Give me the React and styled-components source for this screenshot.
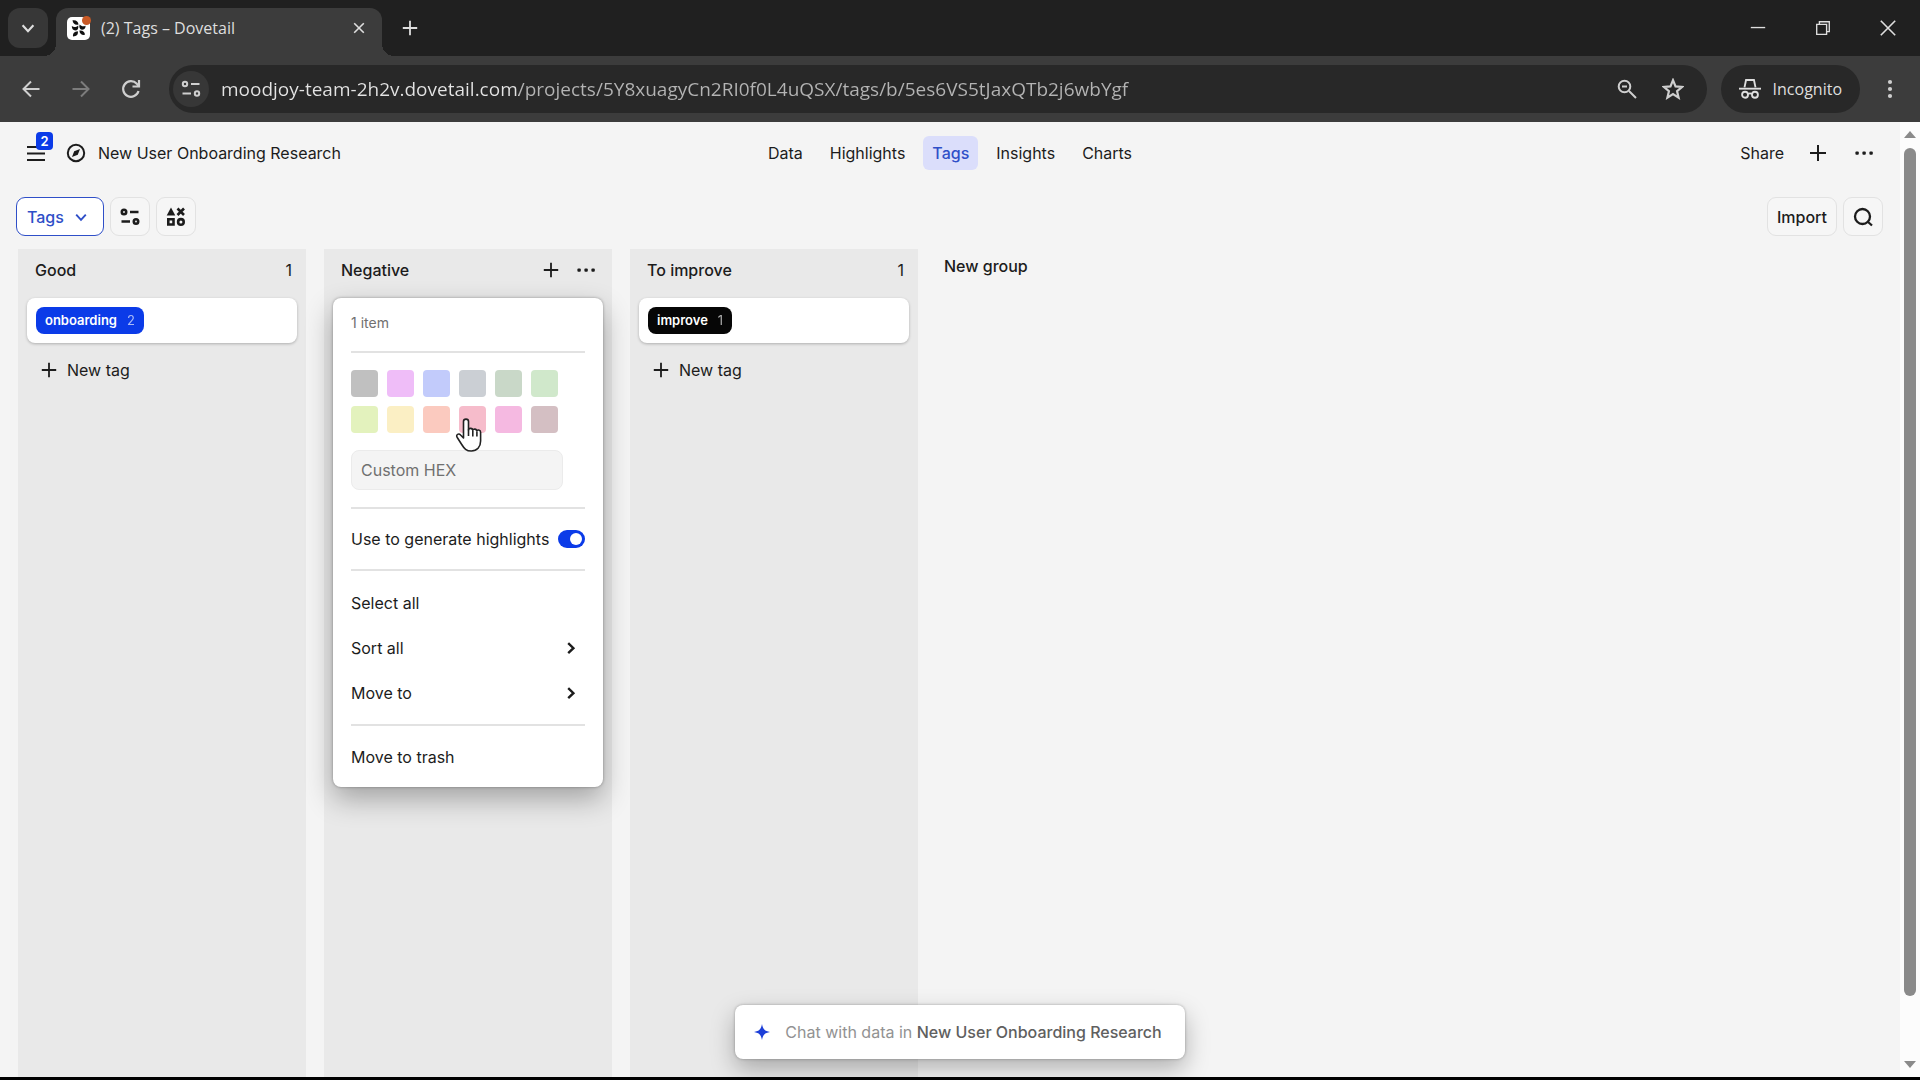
import React, { Component } from 'react';
import styled, { createGlobalStyle } from 'styled-components';

const colors = {
  frame: '#202020',
  toolbar: '#3c3c3c',
  field: '#282828',
  page: '#f4f4f4',
  column: '#e9e9e9',
  text: '#1c1c1c',
  muted: '#707070',
  line: '#e2e2e2',
  blue: '#0b3be8',
  link: '#2f4fc8',
};

const chromeFont = '"Open Sans", "Noto Sans", sans-serif';
const appFont = 'Inter, "Liberation Sans", sans-serif';

const GlobalStyle = createGlobalStyle`
  *, *::before, *::after {
    box-sizing: border-box;
  }
  html, body {
    margin: 0;
    padding: 0;
    background-color: ${colors.page};
  }
  button, input, select {
    margin: 0;
    padding: 0;
    border: 0;
    background: none;
    color: inherit;
    font: inherit;
  }
  svg {
    display: block;
    flex: none;
  }
`

const Window = styled.div`
  position: relative;
  display: flex;
  flex-direction: column;
  min-height: 100vh;
  border-bottom: 3px solid #000;
  color: ${colors.text};
  font-family: ${appFont};
  font-size: 16px;
  line-height: 20px;
`

/* browser frame */

const TabStrip = styled.div`
  display: flex;
  align-items: flex-end;
  height: 56px;
  background-color: ${colors.frame};
  color: #dedede;
  font-family: ${chromeFont};
`

const TabSearch = styled.button`
  display: grid;
  place-items: center;
  align-self: center;
  width: 40px;
  height: 40px;
  margin: 0 8px;
  border-radius: 12px;
  background-color: #373737;
`

const BrowserTab = styled.div`
  position: relative;
  display: flex;
  align-items: center;
  width: 326px;
  height: 48px;
  padding: 0 11px 8px;
  border-radius: 12px 12px 0 0;
  background-color: ${colors.toolbar};
  font-size: 16px;

  &::before, &::after {
    content: '';
    position: absolute;
    bottom: 0;
    width: 12px;
    height: 12px;
  }
  &::before {
    right: 100%;
    background: radial-gradient(circle at 0 0, transparent 12px, ${colors.toolbar} 12px);
  }
  &::after {
    left: 100%;
    background: radial-gradient(circle at 100% 0, transparent 12px, ${colors.toolbar} 12px);
  }
`

const TabTitle = styled.span`
  flex: 1;
  margin-left: 10px;
`

const IconButton = styled.button`
  display: grid;
  place-items: center;
  width: ${props => props.$size || 24}px;
  height: ${props => props.$size || 24}px;
  color: ${props => props.$color || 'inherit'};
`

const NewTab = styled(IconButton)`
  align-self: center;
  margin-left: 12px;
`

const WindowControls = styled.div`
  display: flex;
  align-self: center;
  margin-left: auto;

  button {
    width: 65px;
  }
`

const AddressRow = styled.div`
  display: flex;
  align-items: center;
  height: 66px;
  padding: 0 18px 0 14px;
  background-color: ${colors.toolbar};
  color: #cfcfcf;
  font-family: ${chromeFont};
`

const HistoryButtons = styled.div`
  display: flex;
  gap: 16px;
  margin-right: 21px;
`

const AddressField = styled.label`
  display: flex;
  flex: 1;
  align-items: center;
  height: 48px;
  padding: 0 17px 0 4px;
  border-radius: 24px;
  background-color: ${colors.field};
  gap: 12px;
`

const SiteInfo = styled.span`
  display: grid;
  place-items: center;
  width: 36px;
  height: 36px;
  border-radius: 50%;
  background-color: #373737;
`

const AddressInput = styled.input`
  flex: 1;
  height: 32px;
  background: linear-gradient(90deg, #e4e4e4 298px, #b4b4b4 298px);
  background-clip: text;
  color: transparent;
  font-size: 19px;
`

const Incognito = styled.button`
  display: flex;
  align-items: center;
  gap: 12px;
  height: 48px;
  margin: 0 18px 0 14px;
  padding: 0 18px;
  border-radius: 24px;
  background-color: ${colors.field};
  color: #dedede;
  font-size: 16px;
`

/* page */

const Viewport = styled.div`
  display: flex;
  flex: 1;
`

const Page = styled.div`
  display: flex;
  flex: 1;
  flex-direction: column;
  background-color: ${colors.page};
`

const Header = styled.header`
  display: grid;
  grid-template-columns: 1fr auto 1fr;
  align-items: center;
  height: 62px;
  padding: 0 24px;
`

const HeaderSide = styled.div`
  display: flex;
  align-items: center;
  justify-content: ${props => props.$end ? 'flex-end' : 'flex-start'};
  gap: ${props => props.$end ? 22 : 18}px;
`

const MenuButton = styled(IconButton)`
  position: relative;
`

const Badge = styled.span`
  position: absolute;
  top: -9px;
  left: 12px;
  width: 17px;
  height: 18px;
  border-radius: 4px;
  background-color: ${colors.blue};
  color: #fff;
  font-size: 13px;
  font-weight: 600;
  line-height: 18px;
  text-align: center;
`

const ProjectName = styled.span`
  display: flex;
  align-items: center;
  gap: 12px;
`

const Nav = styled.nav`
  display: flex;
  gap: 9px;
`

const NavLink = styled.a`
  padding: 7px 9px;
  border-radius: 6px;
  background-color: ${props => props.$active ? '#dbdefb' : 'transparent'};
  color: ${props => props.$active ? colors.link : colors.text};
  font-weight: ${props => props.$active ? 500 : 400};
  text-decoration: none;
`

const Toolbar = styled.div`
  display: flex;
  align-items: center;
  gap: 6px;
  padding: 13px 17px 13px 16px;
`

const toolHeight = 39;

const ViewPicker = styled.label`
  display: flex;
  align-items: center;
  gap: 9px;
  height: ${toolHeight}px;
  padding: 0 14px 0 10px;
  border: 1px solid ${colors.link};
  border-radius: 9px;
  background-color: #fff;
  color: ${colors.link};
  font-weight: 500;

  select {
    appearance: none;
    outline: none;
  }
`

const ToolButton = styled.button`
  display: grid;
  place-items: center;
  min-width: 38px;
  height: ${toolHeight}px;
  padding: 0 9px;
  border: 1px solid ${colors.line};
  border-radius: 9px;
  background-color: #f6f6f6;
  font-weight: 500;
`

const Spacer = styled.div`
  flex: 1;
`

const Board = styled.main`
  display: flex;
  flex: 1;
  gap: 18px;
  padding: 0 18px;
`

const Column = styled.section`
  position: relative;
  width: 288px;
  padding: 0 9px;
  background-color: ${colors.column};
`

const ColumnHead = styled.div`
  display: flex;
  align-items: center;
  justify-content: space-between;
  height: 41px;
  margin-bottom: 8px;
  padding: 0 5px 0 8px;
`

const ColumnTitle = styled.h2`
  margin: 0;
  font-size: 16px;
  font-weight: 500;
`

const ColumnActions = styled.div`
  display: flex;
  gap: 11px;
`

const Card = styled.div`
  display: flex;
  align-items: center;
  height: 45px;
  padding: 0 9px;
  border-radius: 8px;
  background-color: #fff;
  box-shadow: 0 1px 3px rgba(0, 0, 0, .25);
`

const Tag = styled.span`
  display: flex;
  gap: 10px;
  padding: 4px 9px;
  border-radius: 8px;
  background-color: ${props => props.$color};
  color: #fff;
  font-size: 13px;
  font-weight: 600;
  line-height: 19px;
`

const TagCount = styled.span`
  font-weight: 400;
  opacity: .65;
`

const NewTagButton = styled.button`
  display: flex;
  align-items: center;
  gap: 9px;
  margin-top: 15px;
  padding: 2px 13px;
`

const NewGroup = styled.button`
  align-self: flex-start;
  margin-left: 8px;
  padding: 7px 0;
  font-weight: 500;
`

const Menu = styled.div`
  position: absolute;
  top: 49px;
  left: 9px;
  width: 270px;
  padding: 15px 18px 0;
  border-radius: 8px;
  background-color: #fff;
  box-shadow: 0 0 3px rgba(0, 0, 0, .35), 0 12px 28px rgba(0, 0, 0, .3);
`

const MenuSection = styled.div`
  display: flex;
  flex-direction: column;
  padding: ${props => props.$pad || 17}px 0;

  & + & {
    border-top: 2px solid ${colors.line};
  }
`

const ItemCount = styled.p`
  margin: 0;
  color: ${colors.muted};
  font-size: 14px;
  line-height: 20px;
`

const Swatches = styled.div`
  display: grid;
  grid-template-columns: repeat(6, 27px);
  gap: 9px;
`

const Swatch = styled.button`
  height: 27px;
  border-radius: 4px;
  background-color: ${props => props.$color};
`

const HexInput = styled.input`
  width: 212px;
  height: 40px;
  margin-top: 17px;
  padding: 0 9px;
  border: 1px solid #ebebeb;
  border-radius: 8px;
  background-color: #f4f4f4;

  &::placeholder {
    color: ${colors.muted};
    opacity: 1;
  }
`

const ToggleRow = styled.label`
  display: flex;
  align-items: center;
  justify-content: space-between;
  padding: 3px 0;
  white-space: nowrap;
`

const Toggle = styled.input`
  appearance: none;
  display: flex;
  justify-content: flex-end;
  width: 27px;
  height: 18px;
  padding: 3px;
  border-radius: 9px;
  background-color: ${colors.blue};

  &::before {
    content: '';
    width: 12px;
    height: 12px;
    border-radius: 50%;
    background-color: #fff;
  }
`

const MenuItem = styled.button`
  display: flex;
  align-items: center;
  justify-content: space-between;
  height: 45px;
  padding-right: 6px;
  text-align: left;
`

/* sits over the board, centred on the window */
const ChatDock = styled.div`
  position: absolute;
  right: 0;
  bottom: 18px;
  left: 0;
  display: flex;
  justify-content: center;
  pointer-events: none;
`

const ChatButton = styled.button`
  display: flex;
  align-items: center;
  gap: 14px;
  height: 54px;
  padding: 0 23px 0 18px;
  border-radius: 8px;
  background-color: #fff;
  box-shadow: 0 0 3px rgba(0, 0, 0, .3), 0 10px 24px rgba(0, 0, 0, .28);
  color: #929292;
  pointer-events: auto;

  strong {
    color: #606060;
    font-weight: 500;
  }
`

const ScrollTrack = styled.div`
  display: flex;
  flex-direction: column;
  align-items: center;
  width: 20px;
  padding: 9px 0;
  background-color: #fcfcfc;
  color: #8a8a8a;
`

const ScrollThumb = styled.div`
  flex: 848;
  width: 12px;
  margin-top: 10px;
  border-radius: 6px;
  background-color: #8a8a8a;
`

const ScrollRest = styled.div`
  flex: 65;
`

const Pointer = styled.svg`
  position: absolute;
  top: 119px;
  left: 121px;
`

/* icons */

const Icon = ({ size = 20, stroke = 2, children, ...rest }) => (
  <svg width={size} height={size} viewBox="0 0 20 20" fill="none" stroke="currentColor" strokeWidth={stroke} aria-hidden="true" {...rest}>
    {children}
  </svg>
)

const PlusIcon = props => <Icon {...props}><path d="M10 2v16M2 10h16" /></Icon>

const DotsIcon = ({ vertical }) => (
  <Icon stroke={0}>
    {[3, 10, 17].map(n => vertical
      ? <circle key={n} cx="10" cy={n} r="2.1" fill="currentColor" />
      : <rect key={n} x={n - 1.6} y="8.4" width="3.4" height="3.4" rx="1" fill="currentColor" />)}
  </Icon>
)

const ChevronDown = ({ size = 20 }) => <Icon size={size} stroke={2.4}><path d="M4 7l6 6.5L16 7" /></Icon>

const ChevronRight = () => <Icon size={16} stroke={3}><path d="M6.5 4l6.5 6.2-6.5 6.2" /></Icon>

const SlidersIcon = props => (
  <Icon {...props}>
    <circle cx="4" cy="5" r="2.2" /><path d="M10 5h8.5M1.5 14.5H10" /><circle cx="16" cy="14.5" r="2.2" />
  </Icon>
)

const ShapesIcon = () => (
  <Icon stroke={2.6}>
    <path d="M5 .5L9.300 8.500H.700z" fill="currentColor" stroke="none" />
    <path d="M11.500 1.500l6.500 6.500M18 1.500L11.500 8" />
    <path d="M2.300 12.300h5.200v5.200H2.300z" />
    <circle cx="14.900" cy="14.900" r="2.800" />
  </Icon>
)

const CompassIcon = () => (
  <Icon>
    <circle cx="10" cy="10" r="8.2" />
    <path d="M14 6l-2.200 5.800L6 14l2.200-5.800z" fill="currentColor" stroke="none" />
  </Icon>
)

const SearchIcon = () => (
  <Icon stroke={2.3}><circle cx="9.500" cy="9.500" r="7.500" /><path d="M14.500 14.500l4.500 4" /></Icon>
)

const SparkleIcon = () => (
  <svg width="18" height="18" viewBox="0 0 18 18" fill="#1d3fd8" aria-hidden="true">
    <path d="M9 1c1 5.200 2.500 7 8 8-5.500 1-7 2.800-8 8-1-5.200-2.500-7-8-8 5.500-1 7-2.800 8-8z" />
  </svg>
)

const Favicon = () => (
  <svg width="24" height="24" viewBox="0 0 24 24" aria-hidden="true">
    <rect x="0" y="1" width="23" height="23" rx="5" fill="#fff" />
    <g fill="#111">
      <path d="M5.500 4.300c3.500-.6 5.800 1 6 4.200-3 1-5.600-.6-6-4.200z" />
      <path d="M4.800 10c2.200 1.600 4.300 1.200 6.400-.6.600 3-.6 5-3 5-2.200 0-3.400-1.800-3.400-4.400z" />
      <path d="M10.800 15.200c.6 3-1 5-4.800 5.200-.4-3 1.300-5 4.800-5.200z" />
      <path d="M12.600 8.500c1.800 2 3.800 2.200 6 1.200 0 2.500-1.400 4-3.600 4-2.200-.2-3.200-2.400-2.400-5.200z" />
      <path d="M12.400 14.500c3.400-.4 5.400 1.200 5.600 4.300-3.200.6-5.400-1-5.600-4.300z" />
    </g>
    <circle cx="19.500" cy="4.500" r="4.500" fill="#c95a26" />
  </svg>
)

const IncognitoIcon = () => (
  <Icon size={22} stroke={1.7}>
    <path d="M5 8.500L6.400 1.800h7.200L15 8.500" />
    <path d="M0 9.700h20" />
    <circle cx="5.500" cy="15.200" r="2.700" />
    <circle cx="14.500" cy="15.200" r="2.700" />
    <path d="M8.200 14.500q1.800-1 3.600 0" />
  </Icon>
)

const HandPointer = () => (
  <Pointer width="30" height="36" viewBox="0 0 30 36" aria-hidden="true">
    <path
      d="M9.500 21V4.500c0-3.200 5-3.200 5 0V13c0-2.300 4.300-2.200 4.300.6 0-2.200 4.100-2 4.100.7 0-1.900 3.700-1.700 3.700.9V24c0 6-3.600 10-9.300 10-5 0-7-2.300-9.600-6.500l-4.600-7.300c-1.500-2.700 1.700-4.200 3.500-2.200z"
      fill="#fff" stroke="#222" strokeWidth="1.6" strokeLinejoin="round"
    />
    <path d="M14.500 12.500V19M18.800 14v5.500M22.900 15v4.500" stroke="#222" strokeWidth="1.6" fill="none" />
  </Pointer>
)

const swatches = [
  '#c0c0c0', '#efbdf8', '#c2cbfb', '#cbcfd4', '#c9d8c8', '#d0e8cb',
  '#e3f2bd', '#fbefc4', '#fbcabf', '#f6bccb', '#f5b9e1', '#d4bfc3',
];

const tabs = ['Data', 'Highlights', 'Tags', 'Insights', 'Charts'];

const GroupMenu = () => (
  <Menu>
    <ItemCount>1 item</ItemCount>
    <MenuSection $pad={9} />
    <MenuSection>
      <Swatches>
        {swatches.map(color => <Swatch key={color} $color={color} aria-label={color} />)}
      </Swatches>
      <HexInput placeholder="Custom HEX" aria-label="Custom HEX" />
    </MenuSection>
    <MenuSection>
      <ToggleRow>
        Use to generate highlights
        <Toggle type="checkbox" defaultChecked />
      </ToggleRow>
    </MenuSection>
    <MenuSection $pad={9}>
      <MenuItem>Select all</MenuItem>
      <MenuItem>Sort all <ChevronRight /></MenuItem>
      <MenuItem>Move to <ChevronRight /></MenuItem>
    </MenuSection>
    <MenuSection $pad={8}>
      <MenuItem>Move to trash</MenuItem>
    </MenuSection>
    <HandPointer />
  </Menu>
)

const TagColumn = ({ title, tag, count, color }) => (
  <Column>
    <ColumnHead>
      <ColumnTitle>{title}</ColumnTitle>
      <span>1</span>
    </ColumnHead>
    <Card>
      <Tag $color={color}>{tag} <TagCount>{count}</TagCount></Tag>
    </Card>
    <NewTagButton><PlusIcon size={18} /> New tag</NewTagButton>
  </Column>
)

class App extends Component {
  render() {
    return (
      <Window>
        <GlobalStyle />
        <TabStrip>
          <TabSearch aria-label="Search tabs"><ChevronDown size={18} /></TabSearch>
          <BrowserTab>
            <Favicon />
            <TabTitle>(2) Tags – Dovetail</TabTitle>
            <IconButton aria-label="Close tab">
              <Icon size={16}><path d="M4 4l12 12M16 4L4 16" /></Icon>
            </IconButton>
          </BrowserTab>
          <NewTab $size={32} aria-label="New tab"><PlusIcon size={18} /></NewTab>
          <WindowControls>
            <IconButton aria-label="Minimize"><Icon size={18} stroke={1.5}><path d="M2 9.500h16" /></Icon></IconButton>
            <IconButton aria-label="Restore">
              <Icon size={18} stroke={1.5}><path d="M3 6h11v11H3zM6 6V3h11v11h-3" /></Icon>
            </IconButton>
            <IconButton aria-label="Close"><Icon size={18} stroke={1.8}><path d="M2 2l16 16M18 2L2 18" /></Icon></IconButton>
          </WindowControls>
        </TabStrip>
        <AddressRow>
          <HistoryButtons>
            <IconButton $size={34} aria-label="Back"><Icon><path d="M18.500 10H2.500M10 2.500L2.500 10l7.500 7.500" /></Icon></IconButton>
            <IconButton $size={34} $color="#7c7c7c" aria-label="Forward"><Icon><path d="M1.500 10h16M10 2.500l7.500 7.500-7.500 7.500" /></Icon></IconButton>
            <IconButton $size={34} aria-label="Reload">
              <Icon stroke={2.2}><path d="M17.500 12A7.800 7.800 0 1 1 15.800 4.800L18 7M18 1v6.500h-6.500" /></Icon>
            </IconButton>
          </HistoryButtons>
          <AddressField>
            <SiteInfo><SlidersIcon /></SiteInfo>
            <AddressInput
              aria-label="Address"
              defaultValue="moodjoy-team-2h2v.dovetail.com/projects/5Y8xuagyCn2RI0f0L4uQSX/tags/b/5es6VS5tJaxQTb2j6wbYgf"
            />
            <IconButton $size={34} aria-label="Zoom">
              <Icon><circle cx="7.500" cy="7.500" r="5.800" /><path d="M12 12l7 7M5 7.500h5" /></Icon>
            </IconButton>
            <IconButton $size={34} aria-label="Bookmark">
              <Icon size={22}><path d="M10 2l2.300 5.600 6 .5-4.600 3.900 1.400 5.900L10 14.700l-5.100 3.200 1.400-5.900L1.700 8.100l6-.5z" /></Icon>
            </IconButton>
          </AddressField>
          <Incognito><IncognitoIcon /> Incognito</Incognito>
          <IconButton aria-label="Menu"><DotsIcon vertical /></IconButton>
        </AddressRow>
        <Viewport>
          <Page>
            <Header>
              <HeaderSide>
                <MenuButton aria-label="Open menu">
                  <Icon><path d="M1 4h18M1 10.500h18M1 17h18" /></Icon>
                  <Badge>2</Badge>
                </MenuButton>
                <ProjectName><CompassIcon /> New User Onboarding Research</ProjectName>
              </HeaderSide>
              <Nav>
                {tabs.map(tab => <NavLink key={tab} href="#" $active={tab === 'Tags'}>{tab}</NavLink>)}
              </Nav>
              <HeaderSide $end>
                <button>Share</button>
                <IconButton aria-label="Add"><PlusIcon /></IconButton>
                <IconButton aria-label="More"><DotsIcon /></IconButton>
              </HeaderSide>
            </Header>
            <Toolbar>
              <ViewPicker>
                <select aria-label="View">
                  <option>Tags</option>
                </select>
                <ChevronDown size={16} />
              </ViewPicker>
              <ToolButton aria-label="Filter"><SlidersIcon stroke={2.6} /></ToolButton>
              <ToolButton aria-label="Group by"><ShapesIcon /></ToolButton>
              <Spacer />
              <ToolButton>Import</ToolButton>
              <ToolButton aria-label="Search"><SearchIcon /></ToolButton>
            </Toolbar>
            <Board>
              <TagColumn title="Good" tag="onboarding" count={2} color={colors.blue} />
              <Column>
                <ColumnHead>
                  <ColumnTitle>Negative</ColumnTitle>
                  <ColumnActions>
                    <IconButton aria-label="Add tag"><PlusIcon size={18} /></IconButton>
                    <IconButton aria-label="Group options"><DotsIcon /></IconButton>
                  </ColumnActions>
                </ColumnHead>
                <GroupMenu />
              </Column>
              <TagColumn title="To improve" tag="improve" count={1} color="#060606" />
              <NewGroup>New group</NewGroup>
            </Board>
          </Page>
          <ScrollTrack>
            <svg width="12" height="7" viewBox="0 0 12 7" fill="currentColor"><path d="M6 0l6 7H0z" /></svg>
            <ScrollThumb />
            <ScrollRest />
            <svg width="12" height="7" viewBox="0 0 12 7" fill="currentColor"><path d="M0 0h12L6 7z" /></svg>
          </ScrollTrack>
        </Viewport>
        <ChatDock>
          <ChatButton>
            <SparkleIcon />
            <span>Chat with data in <strong>New User Onboarding Research</strong></span>
          </ChatButton>
        </ChatDock>
      </Window>
    );
  }
}

export default App;
